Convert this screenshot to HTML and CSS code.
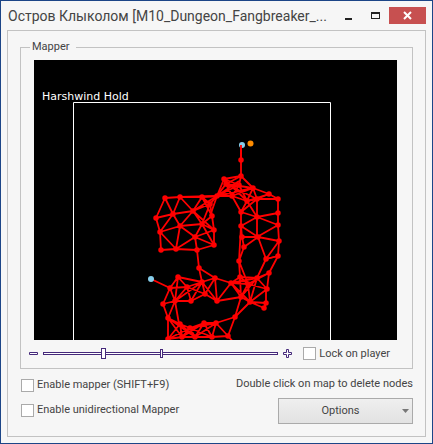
FILE: index.html
```html
<!DOCTYPE html>
<html lang="en">
<head>
<meta charset="utf-8">
<title>Mapper</title>
<link rel="stylesheet" href="styles.css">
</head>
<body>
<div class="window">
  <header class="titlebar">
    <h1 class="title">Остров Клыколом [M10_Dungeon_Fangbreaker_...</h1>
    <div class="window-buttons">
      <button class="win-btn" type="button" aria-label="Minimize"><svg width="9" height="9" viewBox="0 0 9 9"><path d="M1 7h7v2H1z" fill="#222"/></svg></button>
      <button class="win-btn" type="button" aria-label="Maximize"><svg width="9" height="9" viewBox="0 0 9 9"><path d="M0 1h9v7H0zM1 3v4h7V3z" fill="#222" fill-rule="evenodd"/></svg></button>
      <button class="win-btn close" type="button" aria-label="Close"><svg width="9" height="9" viewBox="0 0 9 9"><path d="M1 1l7 7M8 1l-7 7" stroke="#fff" stroke-width="2"/></svg></button>
    </div>
  </header>
  <main class="panel">
    <fieldset class="group">
      <legend>Mapper</legend>
      <div class="map">
        <svg class="graph" viewBox="34 60 363 280" preserveAspectRatio="xMidYMin slice" role="img" aria-label="Map graph">
          <path d="M73.500 400V102.500H330.500V400" fill="none" stroke="#fff"/>
          <g fill="none" stroke="#f00" stroke-width="1.800" stroke-linejoin="round">
            <path d="M241 146V176L224 179L239 185L241 176L253 188L269 194L278 199V213L278 225L279 241L278 256L266 259"/>
            <path d="M165 198L180 197L202 197L217 196L232 196L247 201L257 199L269 194M165 198L156 218L160 232L161 250L176 249L197 250L214 245V230L212 216L210 204L217 196L224 179"/>
            <path d="M165 198L173 214L156 218M180 197L173 214L193 211L180 197M173 214L160 232L180 226L173 214M193 211L180 226L202 224L193 211L202 197M193 211L217 196M202 197L210 204L193 211M202 197L212 216L202 224L210 204M202 224L214 230M193 211L214 230M160 232L176 249L180 226L195 237L202 224M195 237L176 249M195 237L197 250L199 268M195 237L214 230M195 237L214 245L202 224L212 216"/>
            <path d="M217 196L226 184L232 196L239 185L217 196L210 216M210 204L226 184L253 188L232 196L241 212L247 201L239 185M224 179L232 196M217 196L253 188L247 201L269 194M241 176L226 184L257 199L253 188M224 179L247 201M180 197L217 196L239 181"/>
            <path d="M241 212L257 199L278 199M241 212V226L242 237L244 247L239 261M241 212L257 217L247 201M257 199V217L278 213M257 217L278 225M257 217L241 226L258 237L242 237M257 217V237L278 225M258 237L244 247M258 237L279 241M258 237L266 259L279 241M266 259L278 256L269 273M266 259L257 278M241 226L239 261"/>
            <path d="M151 279L170 288L178 277L187 287L170 288L175 301L187 287L202 282L178 277M170 288L163 304L175 301L191 301L205 294L217 301L202 282L199 268L215 278L202 282L205 294L187 287L191 301M178 277L175 301L168 318L163 304M202 282L191 301M205 294L215 278L217 301L231 283L215 278M175 301L179 324M175 301L202 282"/>
            <path d="M239 261L240 277L231 283L241 297L217 301M240 277L241 297L248 284L240 277L257 278L269 273L267 289L248 284L231 283M257 278L250 302L248 284M250 302L241 297L257 278L267 289L250 302M239 261L248 284L269 273M231 283L250 302L266 303V289M266 303L264 308L250 302M241 297L235 317L250 302M231 283L257 278"/>
            <path d="M168 318L180 324L190 328L204 323L216 323L235 317L228 336L216 323L212 337L204 323L195 337L190 328L182 337L180 324L168 339V318L182 337L204 323M180 324L195 337L216 323L228 336L235 344M190 328L212 337M190 328L216 323M168 339L190 328M168 318L195 337M168 339L182 337L195 337L212 337L228 336M204 323L212 337"/>
          </g>
          <path fill="none" stroke="#f00" stroke-width="5.500" stroke-linecap="round" d="M241 160h0M241 176h0M224 179h0M226 184h0M239 185h0M253 188h0M269 194h0M278 199h0M257 199h0M247 201h0M232 196h0M217 196h0M210 204h0M202 197h0M165 198h0M180 197h0M156 218h0M173 214h0M193 211h0M160 232h0M180 226h0M202 224h0M214 230h0M212 216h0M161 250h0M176 249h0M197 250h0M214 245h0M195 237h0M241 212h0M241 226h0M242 237h0M244 247h0M239 261h0M257 217h0M258 237h0M278 213h0M278 225h0M279 241h0M278 256h0M266 259h0M170 288h0M178 277h0M163 304h0M175 301h0M191 301h0M187 287h0M202 282h0M199 268h0M205 294h0M217 301h0M215 278h0M168 318h0M180 324h0M190 328h0M204 323h0M216 323h0M182 337h0M195 337h0M212 337h0M168 339h0M240 277h0M231 283h0M248 284h0M257 278h0M269 273h0M267 289h0M266 303h0M264 308h0M250 302h0M241 297h0M235 317h0M228 336h0"/>
          <g fill="#87ceeb"><circle cx="242" cy="145" r="3"/><circle cx="151" cy="279" r="3"/></g>
          <path d="M241 145v15" stroke="#f00" stroke-width="1.800"/>
          <circle cx="250.500" cy="143.500" r="3" fill="#ff8c00"/>
        </svg>
        <span class="map-label">Harshwind Hold</span>
      </div>
      <div class="zoom-row">
        <button class="step" type="button" aria-label="Zoom out"><svg width="9" height="9" viewBox="0 0 9 9"><path d="M.5 3.500h8v2h-8z" fill="#fff" stroke="#45287a"/></svg></button>
        <div class="slider">
          <input type="range" min="0" max="100" value="25" aria-label="Zoom">
          <span class="tick"></span>
        </div>
        <button class="step" type="button" aria-label="Zoom in"><svg width="9" height="9" viewBox="0 0 9 9"><path d="M3.500.5h2v3h3v2h-3v3h-2v-3h-3v-2h3z" fill="#fff" stroke="#45287a"/></svg></button>
        <label class="check"><input type="checkbox">Lock on player</label>
      </div>
    </fieldset>
    <div class="footer">
      <div class="options-left">
        <label class="check"><input type="checkbox">Enable mapper (SHIFT+F9)</label>
        <label class="check"><input type="checkbox">Enable unidirectional Mapper</label>
      </div>
      <div class="options-right">
        <p class="hint">Double click on map to delete nodes</p>
        <button class="menu-btn" type="button" aria-haspopup="menu"><span>Options</span><svg width="7" height="4" viewBox="0 0 7 4"><path d="M0 0h7L3.500 4z" fill="#777"/></svg></button>
      </div>
    </div>
  </main>
</div>
</body>
</html>
```
FILE: styles.css
```css
* { box-sizing: border-box; }

body {
  margin: 0;
  background: #f6f6f6;
  color: #444;
  font: 11px/14px Roboto, sans-serif;
}

button { font: inherit; color: inherit; padding: 0; border: 0; background: none; }
svg { display: block; }

.window {
  display: flex;
  flex-direction: column;
  min-height: 100vh;
  padding: 0 6px 6px;
  border: 1px solid #1c4587;
}

.titlebar { display: flex; align-items: center; height: 29px; }

.title {
  flex: 1;
  min-width: 0;
  margin: 0 0 0 1px;
  overflow: hidden;
  text-overflow: ellipsis;
  white-space: nowrap;
  font: 14px/20px Roboto, sans-serif;
}

.window-buttons { display: flex; }
.win-btn { display: grid; place-items: center; width: 27px; height: 17px; }
.close { width: 37px; background: #c75050; }

.panel {
  flex: 1;
  padding: 9px 12px 11px;
  border: 1px solid #c2c2c2;
}

.group {
  min-width: 0;
  margin: 0;
  padding: 6px 7px 1px;
  border: 1px solid #c2c2c2;
}
.group legend { margin-left: 2px; padding: 0 6px 0 2px; }

.map {
  position: relative;
  height: 280px;
  margin: 0 8px 0 6px;
  overflow: hidden;
  background: #000;
}
.graph { width: 100%; height: 100%; }
.map-label {
  position: absolute;
  left: 8px;
  top: 30px;
  color: #fff;
  font-family: "DejaVu Sans", sans-serif;
}

.zoom-row { display: flex; align-items: center; height: 27px; padding-left: 1px; }
.slider { position: relative; flex: 1; height: 11px; margin: 0 5px; }
.slider input {
  appearance: none;
  display: block;
  width: 100%;
  height: 11px;
  margin: 0;
  background: none;
}
.slider input::-webkit-slider-runnable-track {
  height: 3px;
  border: 1px solid #45287a;
  background: #fff;
}
.slider input::-webkit-slider-thumb {
  appearance: none;
  width: 5px;
  height: 11px;
  margin-top: -5px;
  border: 1px solid #45287a;
  background: #fff;
}
.tick {
  position: absolute;
  left: 50%;
  top: 1px;
  width: 3px;
  height: 9px;
  margin-left: -1px;
  border: 1px solid #45287a;
  background: #fff;
  pointer-events: none;
}

.check { display: flex; align-items: center; gap: 3px; white-space: nowrap; }
.check input {
  appearance: none;
  width: 13px;
  height: 13px;
  margin: 0;
  border: 1px solid #aaa;
  background: #fff;
}
.zoom-row .check { margin: 0 15px 0 11px; }

.footer { display: flex; justify-content: space-between; margin-top: 8px; }
.options-left { display: flex; flex-direction: column; gap: 11px; padding: 1px; }
.options-right { display: flex; flex-direction: column; align-items: flex-end; gap: 7px; }
.hint { margin: 0; }

.menu-btn {
  display: flex;
  align-items: center;
  width: 135px;
  height: 26px;
  padding: 0 3px 0 0;
  border: 1px solid #aaa;
  background: linear-gradient(#efefef, #e2e2e2);
}
.menu-btn span { flex: 1; }
```
